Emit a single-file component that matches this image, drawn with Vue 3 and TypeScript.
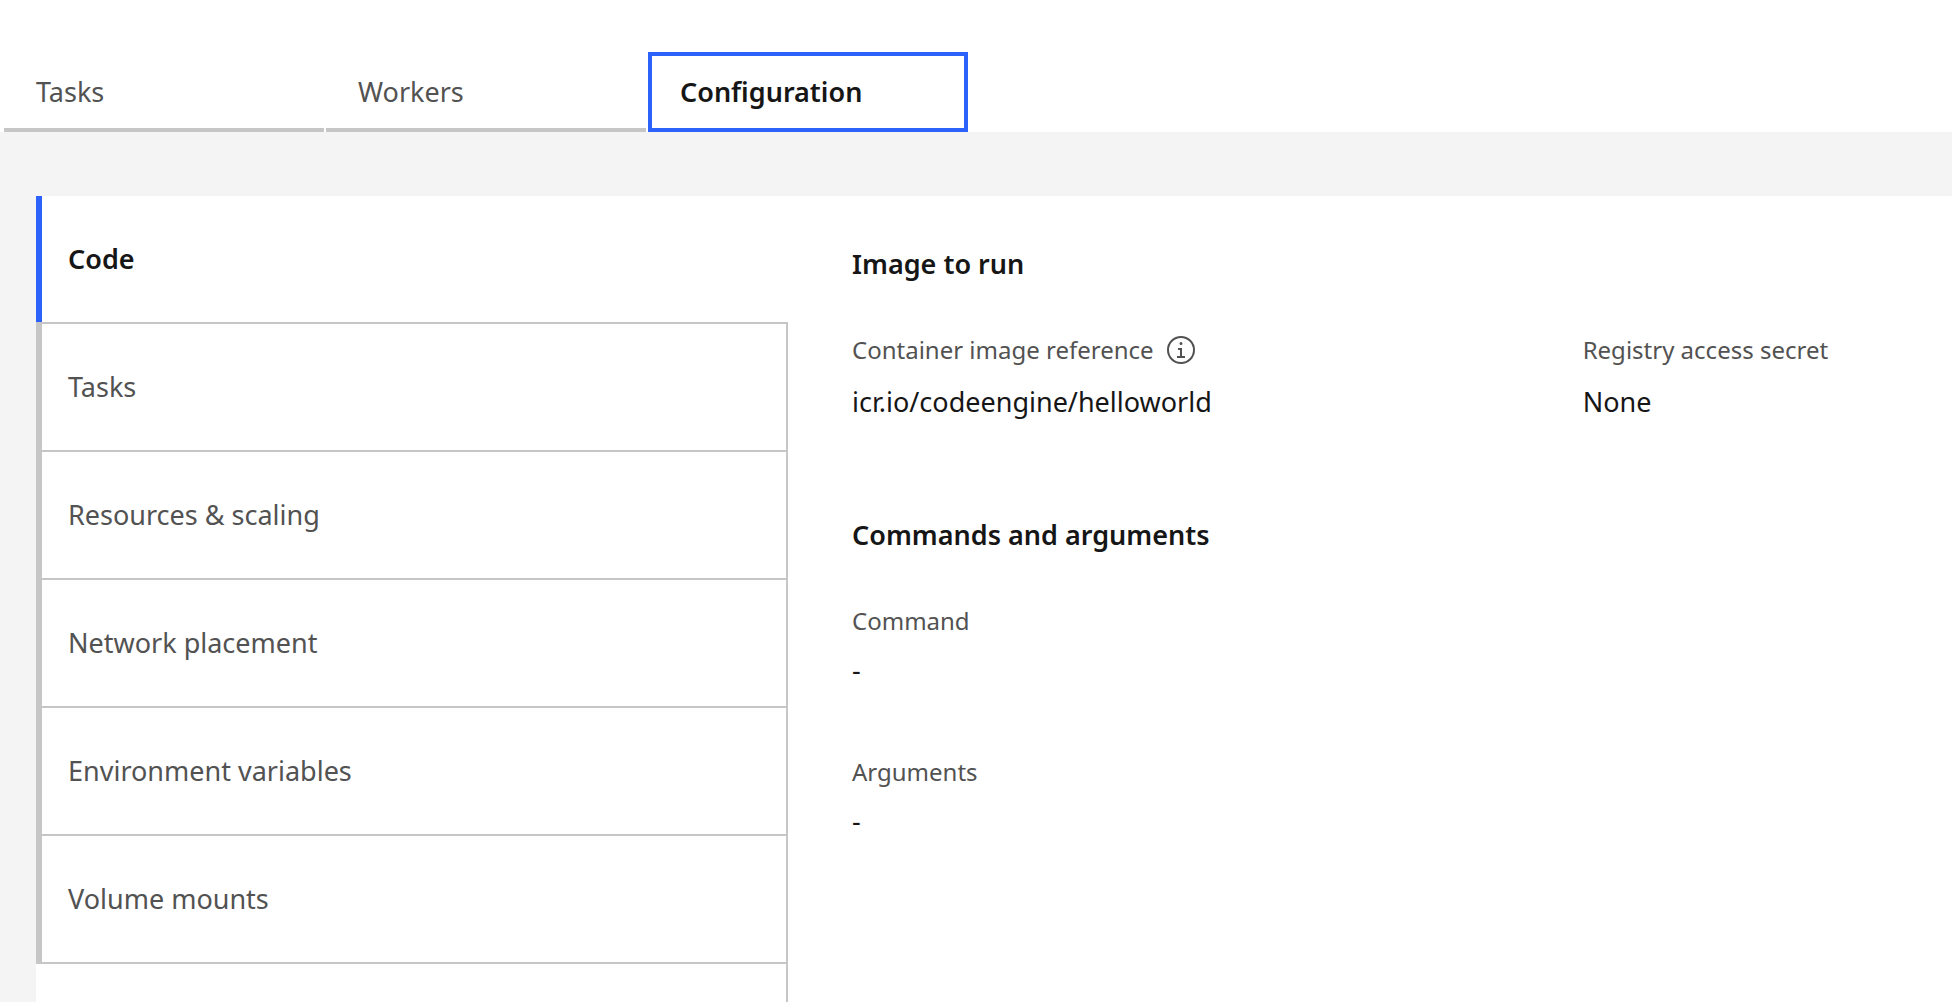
<script setup lang="ts">
import { ref } from 'vue'

const tabs: string[] = ['Tasks', 'Workers', 'Configuration']
const sections: string[] = [
  'Code',
  'Tasks',
  'Resources & scaling',
  'Network placement',
  'Environment variables',
  'Volume mounts',
]

const activeTab = ref('Configuration')
const activeSection = ref('Code')
</script>

<template>
  <div class="page">
    <header class="tabs" role="tablist">
      <button
        v-for="tab in tabs"
        :key="tab"
        type="button"
        role="tab"
        class="tab"
        :class="{ active: tab === activeTab }"
        :aria-selected="tab === activeTab"
        @click="activeTab = tab"
      >{{ tab }}</button>
    </header>

    <div class="body">
      <div class="panel">
        <nav class="sidebar" role="tablist" aria-orientation="vertical">
          <button
            v-for="section in sections"
            :key="section"
            type="button"
            role="tab"
            class="section"
            :class="{ active: section === activeSection }"
            :aria-selected="section === activeSection"
            @click="activeSection = section"
          >{{ section }}</button>
          <div class="rest"></div>
        </nav>

        <main class="details">
          <section class="group">
            <h2>Image to run</h2>
            <dl class="fields columns">
              <div class="field">
                <dt>
                  Container image reference
                  <button type="button" class="info" aria-label="More information">
                    <svg viewBox="0 0 32 32" width="32" height="32" aria-hidden="true">
                      <path d="M17 22v-8h-4v2h2v6h-3v2h8v-2zM16 8a1.5 1.5 0 1 0 1.5 1.5A1.5 1.5 0 0 0 16 8z" />
                      <path d="M16 30a14 14 0 1 1 14-14 14 14 0 0 1-14 14zm0-26a12 12 0 1 0 12 12A12 12 0 0 0 16 4z" />
                    </svg>
                  </button>
                </dt>
                <dd>icr.io/codeengine/helloworld</dd>
              </div>
              <div class="field">
                <dt>Registry access secret</dt>
                <dd>None</dd>
              </div>
            </dl>
          </section>

          <section class="group">
            <h2>Commands and arguments</h2>
            <dl class="fields stacked">
              <div class="field">
                <dt>Command</dt>
                <dd>-</dd>
              </div>
              <div class="field">
                <dt>Arguments</dt>
                <dd>-</dd>
              </div>
            </dl>
          </section>
        </main>
      </div>
    </div>
  </div>
</template>

<style>
body {
  margin: 0;
}
</style>

<style scoped>
.page {
  box-sizing: border-box;
  min-height: 100vh;
  display: flex;
  flex-direction: column;
  background: #ffffff;
  color: #161616;
  font-family: "Noto Sans", "Open Sans", sans-serif;
  font-size: 27px;
  line-height: 40px;
}

button {
  margin: 0;
  background: none;
  border: 0;
  border-radius: 0;
  color: #525252;
  font: inherit;
  text-align: left;
  cursor: pointer;
}

.tabs {
  display: flex;
  gap: 2px;
  padding: 52px 4px 0;
}

.tab {
  box-sizing: border-box;
  width: 320px;
  height: 80px;
  padding: 4px 32px 0;
  border-bottom: 4px solid #c6c6c6;
}

.tab.active {
  padding: 0 28px;
  border: 4px solid #2c62fa;
  color: #161616;
  font-weight: 600;
}

.body {
  flex: 1;
  display: flex;
  padding: 64px 0 0 36px;
  background: #f4f4f4;
}

.panel {
  flex: 1;
  display: grid;
  grid-template-columns: 752px minmax(0, 1fr);
  background: #ffffff;
}

.sidebar {
  display: flex;
  flex-direction: column;
}

.section {
  box-sizing: border-box;
  height: 128px;
  padding: 0 26px;
  border: solid #c6c6c6;
  border-width: 2px 2px 0 6px;
}

.section.active {
  height: 126px;
  border-width: 0 0 0 6px;
  border-color: #2c62fa;
  color: #161616;
  font-weight: 600;
}

.section:nth-last-child(2) {
  height: 130px;
  border-bottom-width: 2px;
}

.rest {
  flex: 1;
  border-right: 2px solid #c6c6c6;
}

.details {
  display: flex;
  flex-direction: column;
  gap: 95px;
  padding: 50px 4px 0 64px;
}

h2 {
  margin: 0 0 52px;
  font-size: 27px;
  font-weight: 600;
  line-height: 36px;
}

.fields {
  display: grid;
  margin: 0;
}

.columns {
  grid-template-columns: 2fr 1fr;
}

.stacked {
  gap: 66px;
}

dt {
  display: flex;
  align-items: center;
  gap: 11px;
  margin-bottom: 16px;
  color: #525252;
  font-size: 24px;
  line-height: 32px;
}

.stacked dt {
  margin-bottom: 13px;
}

dd {
  margin: 0;
}

.info {
  display: flex;
  padding: 0;
}

.info svg {
  fill: currentColor;
}
</style>
